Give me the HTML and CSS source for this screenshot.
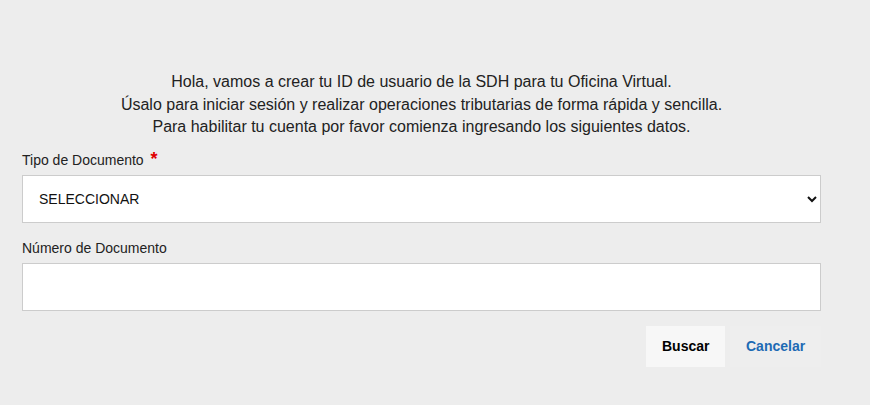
FILE: index.html
```html
<!DOCTYPE html>
<html lang="es">
<head>
  <meta charset="UTF-8">
  <meta name="viewport" content="width=device-width, initial-scale=1.0">
  <title>Crear ID de usuario</title>
  <link rel="stylesheet" href="styles.css">
</head>
<body>
  <div class="wrapper">
    <p class="intro">
      Hola, vamos a crear tu ID de usuario de la SDH para tu Oficina Virtual.<br>
      Úsalo para iniciar sesión y realizar operaciones tributarias de forma rápida y sencilla.<br>
      Para habilitar tu cuenta por favor comienza ingresando los siguientes datos.
    </p>
    <form id="register-form">
      <div class="form-group">
        <label for="doc-type">Tipo de Documento <span class="required">*</span></label>
        <select id="doc-type" name="doc-type" class="field-select">
          <option>SELECCIONAR</option>
          <option>Cédula de Ciudadanía</option>
          <option>NIT</option>
        </select>
      </div>
      <div class="form-group">
        <label for="doc-number">Número de Documento</label>
        <input type="text" id="doc-number" name="doc-number">
      </div>
      <div class="actions">
        <button type="submit" class="btn-primary">Buscar</button>
        <button type="button" class="btn-link">Cancelar</button>
      </div>
    </form>
  </div>
</body>
</html>
```

FILE: styles.css
```css
body {
  margin: 0;
  background-color: #ededed;
  font-family: Arial, "Liberation Sans", sans-serif;
  color: #222;
}
.wrapper {
  padding: 71px 49px 0 22px;
}
.intro {
  margin: 0 0 11px;
  text-align: center;
  font-size: 16px;
  line-height: 22.5px;
}
.form-group {
  margin-bottom: 15px;
}
label {
  display: block;
  font-size: 14px;
  line-height: 20px;
  margin-bottom: 5px;
}
.required {
  color: #e00000;
  font-weight: bold;
  font-size: 18px;
  line-height: 0;
  margin-left: 3px;
}
select, input {
  display: block;
  width: 100%;
  height: 48px;
  box-sizing: border-box;
  border: 1px solid #cccccc;
  background-color: #fff;
  font-family: Arial, "Liberation Sans", sans-serif;
  font-size: 14px;
  color: #111;
  padding: 0 10px 0 16px;
  border-radius: 0;
  outline: none;
}
.field-select {
  padding-left: 12px;
}
.actions {
  display: flex;
  justify-content: flex-end;
  gap: 5px;
}
.actions button {
  height: 41px;
  padding: 0 16px;
  border: none;
  font-family: Arial, "Liberation Sans", sans-serif;
  font-size: 14px;
  font-weight: bold;
  cursor: pointer;
}
.btn-primary {
  background-color: #f7f7f7;
  color: #000;
  width: 79px;
}
.btn-link {
  background-color: #eeeeee;
  color: #1d6ab4;
  width: 91px;
}
```
